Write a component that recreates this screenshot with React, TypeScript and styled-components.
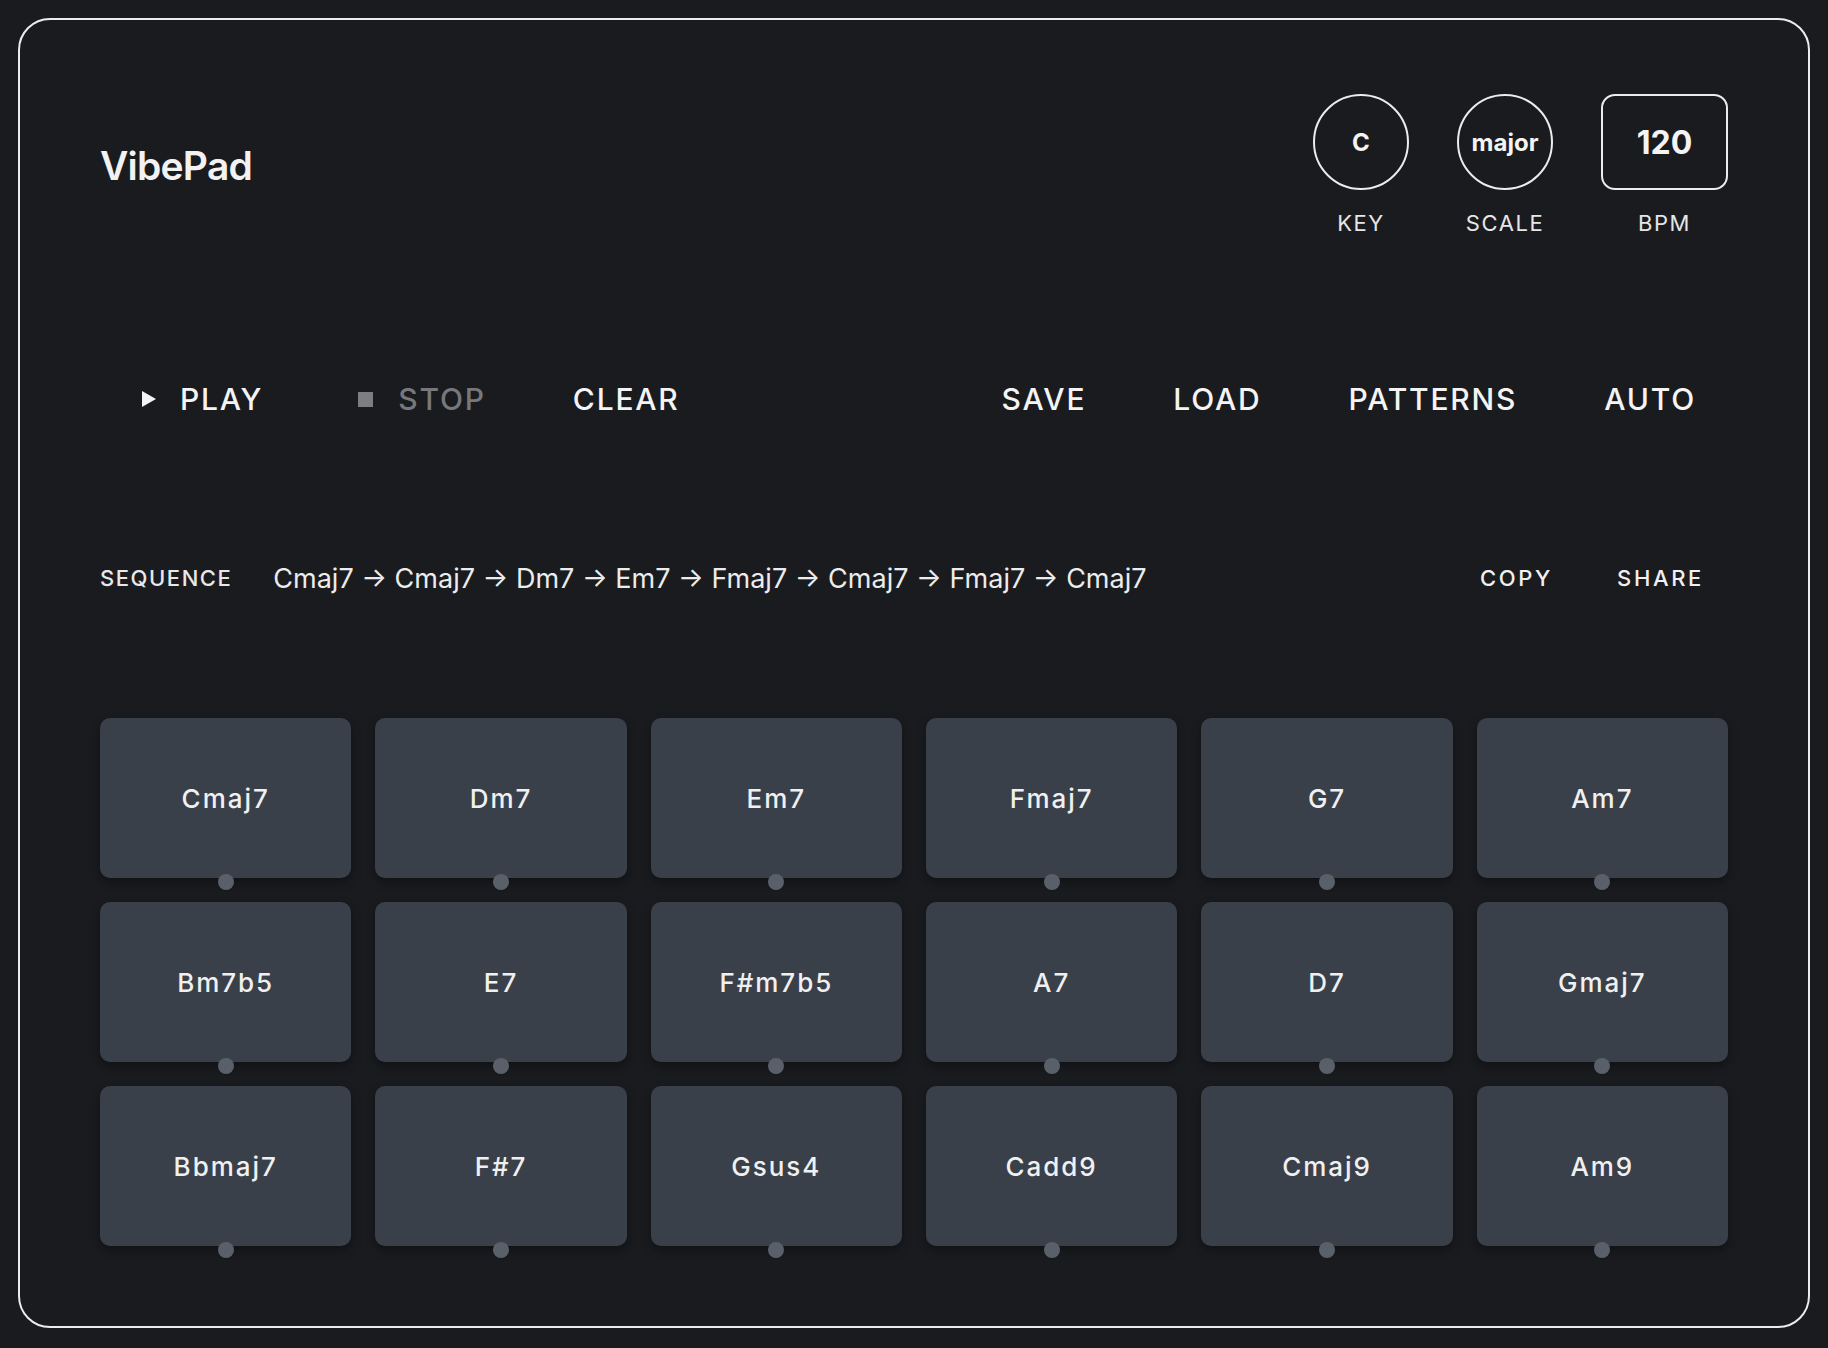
import React from "react";
import styled, { createGlobalStyle } from "styled-components";

const GlobalStyle = createGlobalStyle`
  html, body {
    margin: 0;
    padding: 0;
    background: #1a1b1f;
    font-family: Inter, "Noto Sans", "Liberation Sans", sans-serif;
    color: #f2f2f2;
  }
  * { box-sizing: border-box; }
`;

const Page = styled.div`
  padding: 18px;
`;

const Card = styled.div`
  border: 2px solid #ececec;
  border-radius: 32px;
  background: #1a1b1f;
  padding: 74px 80px 80px;
`;

const Header = styled.header`
  display: flex;
  justify-content: space-between;
  align-items: center;
`;

const Title = styled.h1`
  margin: 0;
  font-size: 39px;
  font-weight: 600;
  letter-spacing: -0.02em;
  color: #f2f2f2;
`;

const Controls = styled.div`
  display: flex;
  gap: 48px;
`;

const Control = styled.div`
  display: flex;
  flex-direction: column;
  align-items: center;
  gap: 19px;
`;

const Knob = styled.div<{ $shape: "circle" | "box" }>`
  width: ${(p) => (p.$shape === "circle" ? "96px" : "127px")};
  height: 96px;
  border: 2px solid #ececec;
  border-radius: ${(p) => (p.$shape === "circle" ? "50%" : "14px")};
  display: flex;
  align-items: center;
  justify-content: center;
  font-weight: 700;
  font-size: ${(p) => (p.$shape === "circle" ? "24px" : "32px")};
  color: #f4f4f4;
`;

const ControlLabel = styled.div`
  font-size: 22px;
  line-height: 28px;
  letter-spacing: 0.07em;
  color: #e6e6e6;
`;

const Transport = styled.div`
  margin-top: 132px;
  display: flex;
  justify-content: space-between;
  align-items: center;
`;

const ButtonGroup = styled.div`
  display: flex;
  align-items: center;
  gap: 23px;
`;

const TransportButton = styled.button<{ $muted?: boolean }>`
  display: flex;
  align-items: center;
  gap: 24px;
  padding: 12px 32px;
  background: transparent;
  border: none;
  font-family: inherit;
  font-size: 30px;
  line-height: 36px;
  font-weight: 500;
  letter-spacing: 0.06em;
  color: ${(p) => (p.$muted ? "#77787b" : "#f4f4f4")};
  cursor: pointer;
`;

const Sequence = styled.div`
  margin-top: 129px;
  display: flex;
  align-items: center;
  height: 40px;
`;

const SeqLabel = styled.div`
  font-size: 22px;
  font-weight: 500;
  letter-spacing: 0.07em;
  color: #e8e8e8;
  margin-right: 41px;
`;

const SeqText = styled.div`
  flex: 1;
  font-size: 27px;
  color: #ececec;
  white-space: nowrap;
`;

const SeqActions = styled.div`
  display: flex;
  gap: 16px;
`;

const SmallButton = styled.button`
  padding: 6px 24px;
  background: transparent;
  border: none;
  font-family: inherit;
  font-size: 22px;
  font-weight: 500;
  letter-spacing: 0.12em;
  color: #f0f0f0;
  cursor: pointer;
`;

const PadGrid = styled.div`
  margin-top: 120px;
  display: grid;
  grid-template-columns: repeat(6, 1fr);
  grid-auto-rows: 160px;
  gap: 24px;
`;

const Pad = styled.button`
  position: relative;
  border: none;
  border-radius: 10px;
  background: #3a404a;
  box-shadow: 0 4px 10px rgba(0, 0, 0, 0.35);
  font-family: inherit;
  font-size: 26px;
  font-weight: 500;
  letter-spacing: 0.075em;
  color: #f0f0f0;
  cursor: pointer;
`;

const PadDot = styled.span`
  position: absolute;
  left: 50%;
  bottom: -12px;
  width: 16px;
  height: 16px;
  margin-left: -8px;
  border-radius: 50%;
  background: #5a606a;
`;

const PlayIcon = () => (
  <svg width="24" height="24" viewBox="0 0 24 24">
    <polygon points="10,4 24,12 10,20" fill="#f4f4f4" />
  </svg>
);

const StopIcon = () => (
  <svg width="24" height="24" viewBox="0 0 24 24">
    <rect x="8" y="5" width="15" height="15" fill="#7d7e81" />
  </svg>
);

const chords = [
  "Cmaj7", "Dm7", "Em7", "Fmaj7", "G7", "Am7",
  "Bm7b5", "E7", "F#m7b5", "A7", "D7", "Gmaj7",
  "Bbmaj7", "F#7", "Gsus4", "Cadd9", "Cmaj9", "Am9",
];

const sequence = ["Cmaj7", "Cmaj7", "Dm7", "Em7", "Fmaj7", "Cmaj7", "Fmaj7", "Cmaj7"];

export default function App() {
  return (
    <>
      <GlobalStyle />
      <Page>
        <Card>
          <Header>
            <Title>VibePad</Title>
            <Controls>
              <Control>
                <Knob $shape="circle">C</Knob>
                <ControlLabel>KEY</ControlLabel>
              </Control>
              <Control>
                <Knob $shape="circle">major</Knob>
                <ControlLabel>SCALE</ControlLabel>
              </Control>
              <Control>
                <Knob $shape="box">120</Knob>
                <ControlLabel>BPM</ControlLabel>
              </Control>
            </Controls>
          </Header>

          <Transport>
            <ButtonGroup>
              <TransportButton>
                <PlayIcon />
                PLAY
              </TransportButton>
              <TransportButton $muted>
                <StopIcon />
                STOP
              </TransportButton>
              <TransportButton>CLEAR</TransportButton>
            </ButtonGroup>
            <ButtonGroup>
              <TransportButton>SAVE</TransportButton>
              <TransportButton>LOAD</TransportButton>
              <TransportButton>PATTERNS</TransportButton>
              <TransportButton>AUTO</TransportButton>
            </ButtonGroup>
          </Transport>

          <Sequence>
            <SeqLabel>SEQUENCE</SeqLabel>
            <SeqText>{sequence.join(" → ")}</SeqText>
            <SeqActions>
              <SmallButton>COPY</SmallButton>
              <SmallButton>SHARE</SmallButton>
            </SeqActions>
          </Sequence>

          <PadGrid>
            {chords.map((c) => (
              <Pad key={c}>
                {c}
                <PadDot />
              </Pad>
            ))}
          </PadGrid>
        </Card>
      </Page>
    </>
  );
}
